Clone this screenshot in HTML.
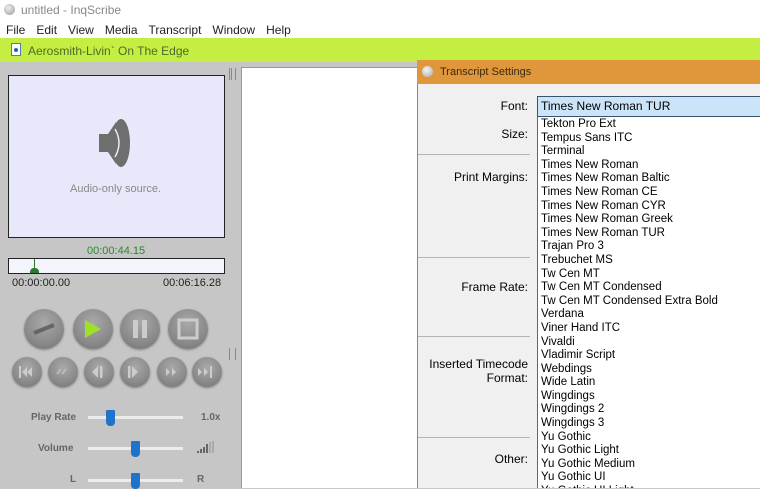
<!DOCTYPE html>
<html><head><style>
*{margin:0;padding:0;box-sizing:border-box}
body{width:760px;height:488px;overflow:hidden;background:#c6c6c6;font-family:"Liberation Sans",sans-serif;position:relative;color:#000}
.a{position:absolute}
.menu span{margin-right:11px}
.btn{position:absolute;border-radius:50%;background:radial-gradient(circle at 50% 35%,#a9a9a9,#8a8a8a 60%,#6f6f6f);box-shadow:0 1px 2px rgba(0,0,0,.35)}
.lab{position:absolute;font-size:12px;color:#000;right:232px;text-align:right}
.li{height:13.6px;line-height:13.6px;font-size:11.5px;padding-left:3px;white-space:nowrap}
.div{position:absolute;left:418px;width:112px;height:1px;background:#b5b5b5}
.track{position:absolute;height:3px;background:#ececec;left:88px;width:95px}
.thumb{position:absolute;width:9px;height:16px;background:#1f73c9;border-radius:1px 1px 4px 4px}
.sl{position:absolute;font-size:10px;color:#666;font-weight:bold}
</style></head><body>
<div class="a" style="left:0;top:0;width:760px;height:38px;background:#fff"></div>
<div class="a" style="left:4px;top:4px;width:11px;height:11px;border-radius:50%;background:radial-gradient(circle at 40% 35%,#eee,#999)"></div>
<div class="a" style="left:21px;top:3px;font-size:12px;color:#888">untitled - InqScribe</div>
<div class="a menu" style="left:6px;top:23px;font-size:12px;color:#222"><span>File</span><span>Edit</span><span>View</span><span>Media</span><span>Transcript</span><span>Window</span><span>Help</span></div>
<div class="a" style="left:0;top:38px;width:760px;height:24px;background:#c4ef42"></div>
<div class="a" style="left:11px;top:43px;width:10px;height:13px;background:#fff;border:1px solid #4b7fb3"></div>
<div class="a" style="left:14px;top:48px;width:4px;height:4px;background:#2a63a8;border-radius:50%"></div>
<div class="a" style="left:28px;top:44px;font-size:12px;color:#4a6a2a">Aerosmith-Livin` On The Edge</div>
<div class="a" style="left:229px;top:68px;width:7px;height:12px;border-left:1px solid #888;border-right:1px solid #888"></div>
<div class="a" style="left:231px;top:68px;width:1px;height:12px;background:#888"></div>
<div class="a" style="left:229px;top:348px;width:7px;height:12px;border-left:1px solid #888;border-right:1px solid #888"></div>
<div class="a" style="left:241px;top:67px;width:180px;height:421px;background:#fff;border-left:1px solid #999;border-top:1px solid #999"></div>
<div class="a" style="left:8px;top:75px;width:217px;height:163px;background:#e7e9fa;border:1px solid #222"></div>
<svg class="a" style="left:95px;top:116px" width="40" height="54" viewBox="0 0 40 54"><path d="M4 18h9l8-12v42l-8-12H4z" fill="#6e6e6e"/><ellipse cx="26" cy="27" rx="9" ry="24" fill="#6e6e6e"/><path d="M20 13q8 14 0 28" stroke="#e7e9fa" stroke-width="1.5" fill="none"/></svg>
<div class="a" style="left:70px;top:183px;font-size:11px;color:#888">Audio-only source.</div>
<div class="a" style="left:87px;top:245px;font-size:11px;color:#2a8a2a">00:00:44.15</div>
<div class="a" style="left:8px;top:258px;width:217px;height:16px;background:#f4f4fc;border:1px solid #222"></div>
<div class="a" style="left:34px;top:259px;width:1px;height:13px;background:#2a7a2a"></div>
<div class="a" style="left:30px;top:268px;width:9px;height:5px;background:#2a7a2a;border-radius:4px 4px 0 0"></div>
<div class="a" style="left:12px;top:277px;font-size:11px;color:#222">00:00:00.00</div>
<div class="a" style="left:163px;top:277px;font-size:11px;color:#222">00:06:16.28</div>
<div class="btn" style="left:24px;top:309px;width:40px;height:40px"></div>
<div class="btn" style="left:73px;top:309px;width:40px;height:40px"></div>
<div class="btn" style="left:120px;top:309px;width:40px;height:40px"></div>
<div class="btn" style="left:168px;top:309px;width:40px;height:40px"></div>
<svg class="a" style="left:0;top:300px" width="240" height="100">
<path d="M34 33l20-8" stroke="#666" stroke-width="4"/>
<path d="M85 20v18l16-9z" fill="#9be228"/>
<rect x="133" y="20" width="5" height="18" fill="#ccc"/><rect x="142" y="20" width="5" height="18" fill="#ccc"/>
<rect x="179" y="20" width="18" height="18" fill="none" stroke="#ccc" stroke-width="3"/>
</svg>
<div class="btn" style="left:12px;top:357px;width:30px;height:30px"></div>
<div class="btn" style="left:48px;top:357px;width:30px;height:30px"></div>
<div class="btn" style="left:84px;top:357px;width:30px;height:30px"></div>
<div class="btn" style="left:120px;top:357px;width:30px;height:30px"></div>
<div class="btn" style="left:157px;top:357px;width:30px;height:30px"></div>
<div class="btn" style="left:192px;top:357px;width:30px;height:30px"></div>
<svg class="a" style="left:0;top:357px" width="240" height="30" fill="#ccc">
<rect x="19" y="9" width="2" height="12"/><path d="M22 15l5-5v10zM27 15l5-5v10z"/>
<path d="M57 17l4-5M62 17l4-5" stroke="#bbb" stroke-width="2"/>
<path d="M92 15l6-6v12z"/><rect x="100" y="9" width="2.5" height="12"/>
<rect x="128" y="9" width="2.5" height="12"/><path d="M132 9l6 6-6 6z"/>
<path d="M166 11l4 4-4 4zM172 11l4 4-4 4z"/>
<path d="M198 11l4 4-4 4zM204 11l4 4-4 4z"/><rect x="210" y="9" width="2" height="12"/>
</svg>
<div class="sl" style="left:31px;top:412px">Play Rate</div>
<div class="track" style="top:416px"></div><div class="thumb" style="left:106px;top:410px"></div>
<div class="sl" style="left:201px;top:412px">1.0x</div>
<div class="sl" style="left:38px;top:443px">Volume</div>
<div class="track" style="top:447px"></div><div class="thumb" style="left:131px;top:441px"></div>
<svg class="a" style="left:197px;top:440px" width="24" height="14" fill="#666"><rect x="0" y="11" width="2" height="2"/><rect x="3" y="9" width="2" height="4"/><rect x="6" y="7" width="2" height="6"/><rect x="9" y="4" width="2" height="9"/><rect x="12" y="2" width="2" height="11" fill="#aaa"/><rect x="15" y="1" width="2" height="12" fill="#aaa"/></svg>
<div class="sl" style="left:70px;top:474px">L</div>
<div class="track" style="top:479px"></div><div class="thumb" style="left:131px;top:473px"></div>
<div class="sl" style="left:197px;top:474px">R</div>

<div class="a" style="left:417px;top:60px;width:343px;height:428px;background:#f0f0f0;border-left:1px solid #888"></div>
<div class="a" style="left:417px;top:60px;width:343px;height:24px;background:#e0963a"></div>
<div class="a" style="left:422px;top:66px;width:11px;height:11px;border-radius:50%;background:radial-gradient(circle at 40% 35%,#f4f4f4,#aaa)"></div>
<div class="a" style="left:440px;top:65px;font-size:11px;line-height:14px;color:#3a2a10">Transcript Settings</div>
<div class="div" style="top:154px"></div><div class="div" style="top:257px"></div><div class="div" style="top:336px"></div><div class="div" style="top:437px"></div>
<div class="lab" style="top:99px">Font:</div>
<div class="lab" style="top:127px">Size:</div>
<div class="lab" style="top:170px">Print Margins:</div>
<div class="lab" style="top:280px">Frame Rate:</div>
<div class="lab" style="top:357px;line-height:14px">Inserted Timecode<br>Format:</div>
<div class="lab" style="top:452px">Other:</div>
<div class="a" style="left:537px;top:96px;width:223px;height:21px;background:#cce4f7;border:1px solid #3a5470;border-right:none;font-size:12px;line-height:19px;padding-left:3px">Times New Roman TUR</div>
<div class="a" style="left:537px;top:117px;width:223px;height:371px;background:#fff;border-left:1px solid #666;overflow:hidden;padding-top:1px">
<div class="li">Tekton Pro Ext</div><div class="li">Tempus Sans ITC</div><div class="li">Terminal</div><div class="li">Times New Roman</div><div class="li">Times New Roman Baltic</div><div class="li">Times New Roman CE</div><div class="li">Times New Roman CYR</div><div class="li">Times New Roman Greek</div><div class="li">Times New Roman TUR</div><div class="li">Trajan Pro 3</div><div class="li">Trebuchet MS</div><div class="li">Tw Cen MT</div><div class="li">Tw Cen MT Condensed</div><div class="li">Tw Cen MT Condensed Extra Bold</div><div class="li">Verdana</div><div class="li">Viner Hand ITC</div><div class="li">Vivaldi</div><div class="li">Vladimir Script</div><div class="li">Webdings</div><div class="li">Wide Latin</div><div class="li">Wingdings</div><div class="li">Wingdings 2</div><div class="li">Wingdings 3</div><div class="li">Yu Gothic</div><div class="li">Yu Gothic Light</div><div class="li">Yu Gothic Medium</div><div class="li">Yu Gothic UI</div><div class="li">Yu Gothic UI Light</div>
</div>
</body></html>
